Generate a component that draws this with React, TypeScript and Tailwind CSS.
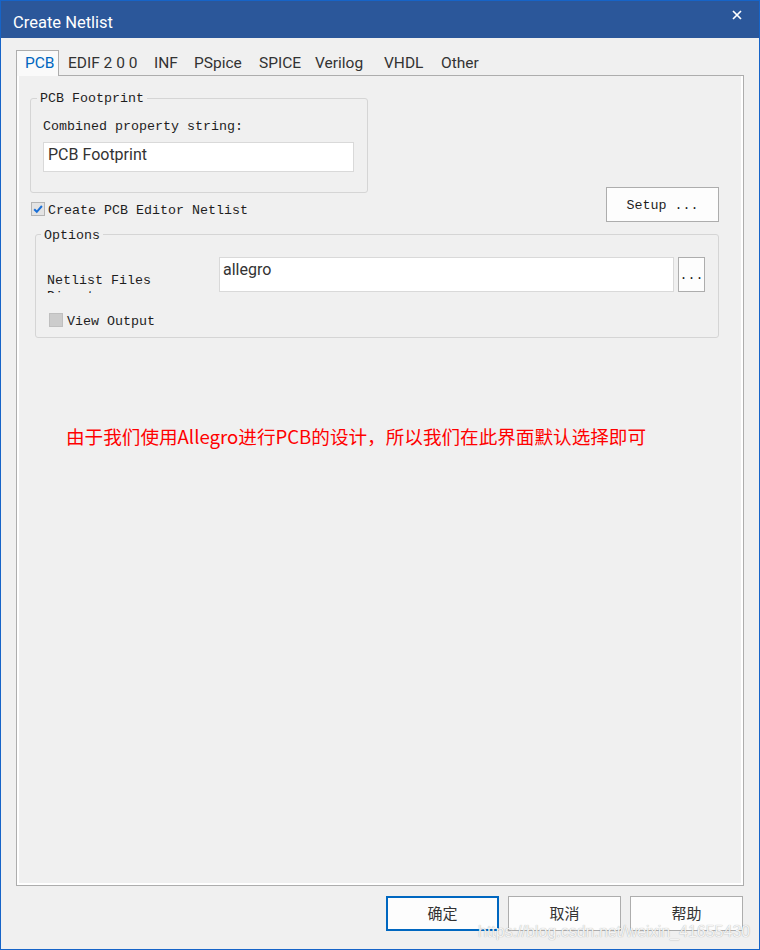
import React from "react";

const mono = "font-['Liberation_Mono',monospace] text-[13.33px] leading-[16px] text-[#1e1e1e]";
const cjk = "font-['Noto_Sans_CJK_SC',sans-serif]";

function CheckBox(props: { checked?: boolean; disabled?: boolean }) {
  return (
    <span
      className={
        "mt-[1px] flex h-[14px] w-[14px] shrink-0 items-center justify-center border " +
        (props.disabled ? "border-[#bfbfbf] bg-[#cccccc]" : "border-[#b4b4b4] bg-[#e3e3e3]")
      }
    >
      {props.checked && (
        <svg viewBox="0 0 12 12" className="h-[12px] w-[12px]">
          <path d="M2.2 6.2 L4.8 8.8 L9.9 3" fill="none" stroke="#1a6fd6" strokeWidth="2" />
        </svg>
      )}
    </span>
  );
}

function Button(props: { label: string; focused?: boolean }) {
  return (
    <div
      className={
        "flex h-[35px] w-[113px] items-center justify-center bg-[#fdfdfd] text-[15px] text-[#333] " +
        cjk +
        (props.focused ? " border-2 border-[#0067c0]" : " border border-[#adadad]")
      }
    >
      {props.label}
    </div>
  );
}

export default function App() {
  const tabs = [
    { name: "EDIF 2 0 0", w: "w-[86px]" },
    { name: "INF", w: "w-[40px]" },
    { name: "PSpice", w: "w-[65px]" },
    { name: "SPICE", w: "w-[56px]" },
    { name: "Verilog", w: "w-[69px]" },
    { name: "VHDL", w: "w-[57px]" },
    { name: "Other", w: "w-[60px]" },
  ];

  return (
    <div className="relative h-[950px] w-[760px] border border-[#1664c8] bg-[#f0f0f0] font-['Roboto','Noto_Sans_CJK_SC',sans-serif]">
      {/* title bar */}
      <div className="flex h-[37px] justify-between bg-[#2b579a]">
        <div className="pl-[12px] pt-[12px] text-[16.5px] leading-[20px] text-white">Create Netlist</div>
        <div className="mr-[17px] mt-[9px]">
          <svg viewBox="0 0 10 10" className="h-[10px] w-[10px]">
            <path d="M1 1 L9 9 M9 1 L1 9" stroke="#fff" strokeWidth="1.7" />
          </svg>
        </div>
      </div>

      <div className="px-[15px] pt-[12px]">
        {/* tabs */}
        <div className="flex h-[25px] items-start text-[15.5px] leading-[20px]">
          <div className="relative z-10 -mb-px h-[26px] w-[43px] border border-b-0 border-[#adadad] bg-[#fafafa] pl-[8px] pt-[2px] text-[#0067c0]">
            PCB
          </div>
          <div className="ml-[9px] flex">
            {tabs.map((t) => (
              <div key={t.name} className={t.w + " pt-[3px] text-[#333]"}>
                {t.name}
              </div>
            ))}
          </div>
        </div>

        {/* panel */}
        <div className="h-[811px] w-[728px] border border-[#adadad] pl-[13px] shadow-[inset_2px_0_0_#fff,inset_-2px_0_0_#fff,inset_0_-2px_0_#fff]">
          <div className="mt-[13px] flex items-start justify-between pr-[24px]">
            <div>
              <fieldset className="w-[338px] rounded-[3px] border border-[#d5d5d5] pb-[20px] pl-[12px]">
                <legend className={mono + " -ml-[6px] px-[3px] pt-[2px]"}>PCB Footprint</legend>
                <div className={mono + " mt-[12px]"}>Combined property string:</div>
                <div className="mt-[7px] h-[30px] w-[311px] border border-[#d9d9d9] bg-white pl-[4px] pt-[2px] text-[16px] leading-[20px] text-[#333]">
                  PCB Footprint
                </div>
              </fieldset>
              <div className="ml-[1px] mt-[8px] flex items-start">
                <CheckBox checked />
                <span className={mono + " ml-[3px] pt-[2px]"}>Create PCB Editor Netlist</span>
              </div>
            </div>
            <div className={mono + " mt-[98px] flex h-[35px] w-[113px] items-center justify-center border border-[#adadad] bg-[#fdfdfd] pt-[3px]"}>
              Setup ...
            </div>
          </div>

          <fieldset className="ml-[5px] mt-[3px] w-[684px] rounded-[3px] border border-[#d5d5d5] pb-[7px] pl-[11px]">
            <legend className={mono + " -ml-[6px] px-[3px] pt-[3px]"}>Options</legend>
            <div className="mt-[13px] flex items-start">
              {/* the dialog clips the second line of this label */}
              <div className={mono + " mt-[16px] h-[20px] w-[172px] overflow-hidden"}>Netlist Files Directory</div>
              <div className="h-[35px] w-[455px] border border-[#d9d9d9] bg-white pl-[3px] pt-[2px] text-[16px] leading-[20px] text-[#333]">
                allegro
              </div>
              <div className={mono + " ml-[4px] flex h-[35px] w-[27px] items-center justify-center border border-[#adadad] bg-[#fdfdfd] pt-[3px]"}>
                ...
              </div>
            </div>
            <div className="ml-[2px] mt-[19px] flex items-start">
              <CheckBox disabled />
              <span className={mono + " ml-[4px] pt-[2px]"}>View Output</span>
            </div>
          </fieldset>

          <div className={cjk + " ml-[36px] mt-[86px] text-[18.6px] leading-[24px] text-[#ff0000]"}>
            由于我们使用Allegro进行PCB的设计，所以我们在此界面默认选择即可
          </div>
        </div>

        {/* buttons */}
        <div className="mt-[10px] flex justify-end gap-[9px] pr-[1px]">
          <Button label="确定" focused />
          <Button label="取消" />
          <Button label="帮助" />
        </div>
      </div>

      <div className="absolute left-[477px] top-[921px] font-['Liberation_Sans',sans-serif] text-[16px] leading-[20px] text-[#f4f4f4] [text-shadow:0_0_1px_rgba(0,0,0,0.35)]">
        https://blog.csdn.net/weixin_41655430
      </div>
    </div>
  );
}
